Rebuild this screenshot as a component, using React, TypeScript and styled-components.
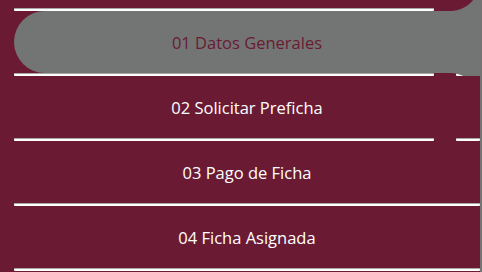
import React from "react";
import styled, { createGlobalStyle, css } from "styled-components";

const MAROON = "#6a1b33";
const GRAY = "#737574";

const Global = createGlobalStyle`
  html, body { margin: 0; padding: 0; }
  body {
    background: ${MAROON};
    font-family: "Open Sans", "Noto Sans", "Liberation Sans", sans-serif;
    overflow: hidden;
  }
`;

const Layout = styled.div`
  display: flex;
  height: 272px;
  overflow: hidden;
`;

const Sidebar = styled.nav`
  width: 480px;
  flex: 0 0 480px;
  background: ${MAROON};
  display: flex;
  flex-direction: column;
  padding-top: 8px;
  padding-left: 14px;
  box-sizing: border-box;
`;

const Content = styled.main`
  flex: 1;
  background: ${GRAY};
`;

const Item = styled.div`
  display: flex;
  flex-direction: column;
`;

const Separator = styled.div`
  display: flex;
  height: 3px;
  flex: 0 0 3px;
`;

const Line = styled.span<{ $w?: number }>`
  ${(p) => (p.$w ? css`flex: 0 0 ${p.$w}px;` : css`flex: 1;`)}
  height: 3px;
  box-sizing: border-box;
  border-top: 1px solid #a7a7a7;
  background: #ffffff;
  border-radius: 1px;
`;

const GapSpace = styled.span<{ $w: number }>`
  flex: 0 0 ${(p) => p.$w}px;
`;

const Body = styled.a<{ $active?: boolean }>`
  position: relative;
  height: 62px;
  display: flex;
  align-items: center;
  justify-content: center;
  font-size: 16.5px;
  color: #ffffff;
  text-decoration: none;
  background: ${MAROON};
  ${(p) =>
    p.$active &&
    css`
      background: ${GRAY};
      color: ${MAROON};
      border-radius: 31px 0 0 31px;
      &::before,
      &::after {
        content: "";
        position: absolute;
        right: 0;
        width: 30px;
        height: 30px;
      }
      &::before {
        top: -30px;
        background: radial-gradient(circle at 0 0, transparent 29.5px, ${GRAY} 30.5px);
      }
      &::after {
        top: 100%;
        background: radial-gradient(circle at 0 100%, transparent 29.5px, ${GRAY} 30.5px);
      }
    `}
`;

type Gap = "none" | "end" | "split";

const items: { label: string; active: boolean; gap: Gap }[] = [
  { label: "01 Datos Generales", active: true, gap: "end" },
  { label: "02 Solicitar Preficha", active: false, gap: "split" },
  { label: "03 Pago de Ficha", active: false, gap: "split" },
  { label: "04 Ficha Asignada", active: false, gap: "none" },
];

function Sep({ gap }: { gap: Gap }) {
  return (
    <Separator>
      <Line />
      {gap === "end" && <GapSpace $w={46} />}
      {gap === "split" && (
        <>
          <GapSpace $w={22} />
          <Line $w={24} />
        </>
      )}
    </Separator>
  );
}

export default function App() {
  return (
    <>
      <Global />
      <Layout>
        <Sidebar>
          {items.map((it) => (
            <Item key={it.label}>
              <Sep gap={it.gap} />
              <Body href="#" $active={it.active}>
                {it.label}
              </Body>
            </Item>
          ))}
          <Sep gap="none" />
        </Sidebar>
        <Content />
      </Layout>
    </>
  );
}
